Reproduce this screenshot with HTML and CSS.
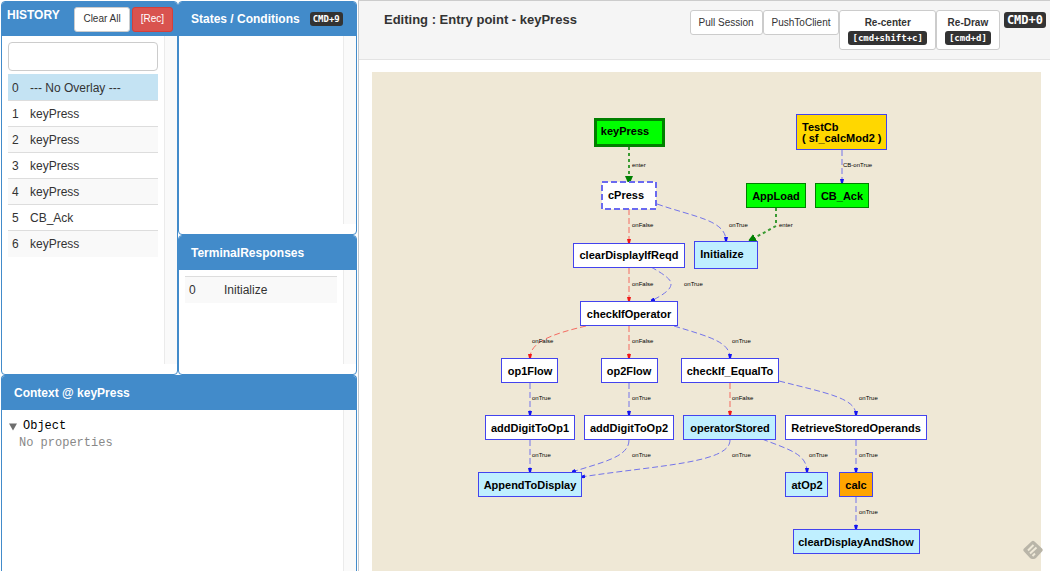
FILE: index.html
```html
<!DOCTYPE html>
<html lang="en">
<head>
<meta charset="utf-8">
<title>Flow editor</title>
<link rel="stylesheet" href="styles.css">
</head>
<body>
<div class="app">
  <aside class="sidebar">
    <div class="columns">
      <section class="panel history">
        <header class="panel-head history-head">
          <h2>HISTORY</h2>
          <button class="btn" type="button">Clear All</button>
          <button class="btn danger" type="button">[Rec]</button>
        </header>
        <div class="panel-body">
          <div class="content">
            <input class="filter" type="text" aria-label="Filter history">
            <table class="rows">
              <tbody>
                <tr class="selected"><td>0</td><td>--- No Overlay ---</td></tr>
                <tr><td>1</td><td>keyPress</td></tr>
                <tr class="alt"><td>2</td><td>keyPress</td></tr>
                <tr><td>3</td><td>keyPress</td></tr>
                <tr class="alt"><td>4</td><td>keyPress</td></tr>
                <tr><td>5</td><td>CB_Ack</td></tr>
                <tr class="alt"><td>6</td><td>keyPress</td></tr>
              </tbody>
            </table>
          </div>
          <div class="track"></div>
        </div>
      </section>
      <div class="stack">
        <section class="panel states">
          <header class="panel-head">
            <h2>States / Conditions</h2>
            <kbd>CMD+9</kbd>
          </header>
          <div class="panel-body">
            <div class="content"></div>
            <div class="track"></div>
          </div>
        </section>
        <section class="panel responses">
          <header class="panel-head"><h2>TerminalResponses</h2></header>
          <div class="panel-body">
            <div class="content">
              <table class="rows wide">
                <tbody><tr class="alt"><td>0</td><td>Initialize</td></tr></tbody>
              </table>
            </div>
            <div class="track"></div>
          </div>
        </section>
      </div>
    </div>
    <section class="panel context">
      <header class="panel-head"><h2>Context @ keyPress</h2></header>
      <div class="panel-body">
        <div class="content tree">
          <div class="tree-root">
            <svg width="8" height="8" viewBox="0 0 8 8" aria-hidden="true"><path d="M0 0.5H8L4 7.5Z" fill="#6e6e6e"/></svg>
            <span>Object</span>
          </div>
          <div class="tree-empty">No properties</div>
        </div>
        <div class="track"></div>
      </div>
    </section>
  </aside>

  <main class="editor">
    <header class="toolbar">
      <h1>Editing : Entry point - keyPress</h1>
      <div class="actions">
        <button class="btn" type="button">Pull Session</button>
        <button class="btn" type="button">PushToClient</button>
        <button class="btn strong" type="button">Re-center<kbd>[cmd+shift+c]</kbd></button>
        <button class="btn strong" type="button">Re-Draw<kbd>[cmd+d]</kbd></button>
        <kbd class="large">CMD+0</kbd>
      </div>
    </header>
    <div class="canvas">
      <svg class="graph" viewBox="372 72 669 499" preserveAspectRatio="xMidYMin meet" role="img" aria-label="Flow graph">
        <defs>
          <marker id="tip-blue" markerUnits="userSpaceOnUse" markerWidth="4" markerHeight="4" refX="4" refY="2" orient="auto"><path d="M0 0L4 1V3L0 4Z" fill="#1414f0"/></marker>
          <marker id="tip-red" markerUnits="userSpaceOnUse" markerWidth="4" markerHeight="4" refX="4" refY="2" orient="auto"><path d="M0 0L4 1V3L0 4Z" fill="#f01818"/></marker>
          <marker id="tip-green" markerUnits="userSpaceOnUse" markerWidth="7" markerHeight="8" refX="7" refY="4" orient="auto"><path d="M0 0L7 3V5L0 8Z" fill="#008000"/></marker>
        </defs>

        <g class="edges green">
          <path d="M629 147V183"/>
          <path d="M776 208V226L749 241"/>
        </g>
        <g class="edges red">
          <path d="M629 209V243"/>
          <path d="M629 268V301"/>
          <path d="M586 326C552 334 530 342 530 358"/>
          <path d="M629 326V358"/>
          <path d="M730 383V415"/>
        </g>
        <g class="edges blue">
          <path d="M657 204C694 217 726 220 726 241"/>
          <path d="M651 267C667 276 671 280 671 284C671 289 665 294 651 301"/>
          <path d="M842 150V183"/>
          <path d="M674 326C710 337 730 342 730 358"/>
          <path d="M530 383V415"/>
          <path d="M629 383V415"/>
          <path d="M779 381C826 393 856 398 856 415"/>
          <path d="M530 440V472"/>
          <path d="M629 440C629 457 603 462 572 472"/>
          <path d="M730 440C730 463 660 465 581 477"/>
          <path d="M762 439C790 450 807 454 807 472"/>
          <path d="M856 440V472"/>
          <path d="M856 497V529"/>
        </g>

        <g class="nodes">
          <rect class="entry current" x="595" y="119" width="68" height="26"/>
          <rect class="dashed" x="602" y="182" width="54" height="27"/>
          <rect x="573" y="243" width="111" height="24"/>
          <rect class="end" x="694" y="241" width="63" height="27"/>
          <rect class="entry" x="746" y="183" width="59" height="24"/>
          <rect class="entry" x="815" y="183" width="53" height="24"/>
          <rect class="callback" x="796" y="114" width="90" height="35"/>
          <rect x="580" y="301" width="97" height="24"/>
          <rect x="501" y="358" width="56" height="24"/>
          <rect x="601" y="358" width="56" height="24"/>
          <rect x="681" y="358" width="97" height="24"/>
          <rect x="485" y="415" width="89" height="24"/>
          <rect x="584" y="415" width="89" height="24"/>
          <rect class="end" x="683" y="415" width="92" height="24"/>
          <rect x="785" y="415" width="141" height="24"/>
          <rect class="end" x="478" y="472" width="103" height="24"/>
          <rect class="end" x="785" y="472" width="42" height="24"/>
          <rect class="calc" x="839" y="472" width="33" height="24"/>
          <rect class="end" x="793" y="529" width="126" height="24"/>
        </g>

        <g class="names">
          <text x="625" y="135">keyPress</text>
          <text x="626" y="199">cPress</text>
          <text x="629" y="259">clearDisplayIfReqd</text>
          <text x="722" y="258">Initialize</text>
          <text x="776" y="200">AppLoad</text>
          <text x="842" y="200">CB_Ack</text>
          <text class="left" x="802" y="131">TestCb</text>
          <text class="left" x="802" y="142">( sf_calcMod2 )</text>
          <text x="629" y="318">checkIfOperator</text>
          <text x="530" y="375">op1Flow</text>
          <text x="629" y="375">op2Flow</text>
          <text x="730" y="375">checkIf_EqualTo</text>
          <text x="530" y="432">addDigitToOp1</text>
          <text x="629" y="432">addDigitToOp2</text>
          <text x="730" y="432">operatorStored</text>
          <text x="856" y="432">RetrieveStoredOperands</text>
          <text x="530" y="489">AppendToDisplay</text>
          <text x="807" y="489">atOp2</text>
          <text x="856" y="489">calc</text>
          <text x="856" y="546">clearDisplayAndShow</text>
        </g>

        <g class="labels">
          <text x="632" y="167">enter</text>
          <text x="843" y="167">CB-onTrue</text>
          <text x="632" y="227">onFalse</text>
          <text x="729" y="227">onTrue</text>
          <text x="779" y="227">enter</text>
          <text x="632" y="286">onFalse</text>
          <text x="684" y="286">onTrue</text>
          <text x="532" y="343">onFalse</text>
          <text x="632" y="343">onFalse</text>
          <text x="732" y="343">onTrue</text>
          <text x="532" y="400">onTrue</text>
          <text x="632" y="400">onTrue</text>
          <text x="732" y="400">onFalse</text>
          <text x="859" y="400">onTrue</text>
          <text x="532" y="457">onTrue</text>
          <text x="632" y="457">onTrue</text>
          <text x="732" y="457">onTrue</text>
          <text x="809" y="457">onTrue</text>
          <text x="859" y="457">onTrue</text>
          <text x="859" y="514">onTrue</text>
        </g>
      </svg>
      <svg class="badge" width="20" height="20" viewBox="0 0 20 20" aria-hidden="true">
        <path d="M8.5 1.5Q10 0 11.5 1.5L19 8.5Q20.500 10 19 11.5L13 18Q12 19 10.5 19H9.5Q8 19 7 18L1 11.5Q-0.5 10 1 8.5Z" fill="#b9b5a8"/>
        <path d="M5 10.5L10.5 5M7 13.5L13.5 7.5M9.5 16L12 13.5" stroke="#efe9d8" stroke-width="2" fill="none"/>
      </svg>
    </div>
  </main>
</div>
</body>
</html>
```

FILE: styles.css
```css
* { box-sizing: border-box; }

body {
  margin: 0;
  background: #fff;
  color: #333;
  font: 12px/18px "Liberation Sans", Arial, sans-serif;
}

h1, h2 { margin: 0; font-weight: bold; }
h2 { font-size: 12px; line-height: 18px; white-space: nowrap; }

.app { display: flex; min-height: 100vh; }

/* Sidebar */
.sidebar {
  flex: 0 0 359px;
  display: flex;
  flex-direction: column;
  padding: 1px 1px 0;
  border-right: 1px solid #c4c8cc;
}

.columns { display: grid; grid-template-columns: 177px 1fr; min-height: 374px; }
.stack { display: flex; flex-direction: column; }
.panel {
  display: flex;
  flex-direction: column;
  border: 1px solid #428bca;
  border-radius: 4px;
  overflow: hidden;
}
.states { flex: 0 0 234px; }
.responses, .context { flex: 1; }
.context { border-bottom: 0; border-radius: 4px 4px 0 0; }

.panel-head {
  display: flex;
  align-items: center;
  gap: 10px;
  height: 34px;
  padding: 0 12px;
  background: #428bca;
  color: #fff;
}
.history-head { gap: 2px; padding: 0 4px 0 5px; }
.history-head h2 { flex: 1; align-self: flex-start; padding-top: 4px; }

.panel-body { flex: 1; display: flex; padding-bottom: 10px; }
.context .panel-body { padding-bottom: 0; }
.content { flex: 1; padding: 6px; }
.track {
  width: 13px;
  background: #fafafa;
  border-left: 1px solid #ebebeb;
}

.filter {
  display: block;
  width: 100%;
  height: 29px;
  margin-bottom: 3px;
  padding: 4px 8px;
  border: 1px solid #ccc;
  border-radius: 4px;
  background: #fff;
}

.rows { width: 100%; border-collapse: collapse; }
.rows td { height: 26px; padding: 0 4px; border-top: 1px solid #ddd; }
.rows td:first-child { width: 18px; }
.rows.wide td:first-child { width: 35px; }
.rows .alt { background: #f9f9f9; }
.rows .selected { background: #c4e3f3; }
.rows .selected td { border-top-color: #c4e3f3; }

.tree {
  padding: 8px 7px;
  font: 12px/17px "Liberation Mono", "Courier New", monospace;
}
.tree-root { display: flex; align-items: center; gap: 6px; color: #000; }
.tree-empty { padding-left: 10px; color: #888; }

/* Buttons and key hints */
.btn {
  height: 25px;
  padding: 0 8px;
  border: 1px solid #ccc;
  border-radius: 3px;
  background: #fff;
  color: #333;
  font: 10px/16px "Liberation Sans", Arial, sans-serif;
}
.btn.danger { border-color: #d43f3a; background: #d9534f; color: #fff; }
.btn.strong {
  display: flex;
  flex-direction: column;
  align-items: center;
  height: 40px;
  padding: 4px 8px;
  font-weight: bold;
}

kbd {
  padding: 0 4px;
  border-radius: 3px;
  background: #333;
  color: #fff;
  font: bold 9px/14px "DejaVu Sans Mono", monospace;
}
.panel-head kbd { padding: 0 3px; }
kbd.large { margin: 2px 0 0 4px; padding: 0 3px; font-size: 12px; line-height: 16px; }

/* Editor */
.editor { flex: 1; display: flex; flex-direction: column; min-width: 0; }
.toolbar {
  display: flex;
  align-items: flex-start;
  justify-content: space-between;
  min-height: 60px;
  padding: 9px 4px 0 25px;
  background: #f5f5f5;
  border-top: 1px solid #ccc;
  border-bottom: 1px solid #e3e3e3;
}
.toolbar h1 { font-size: 13px; line-height: 20px; }
.actions { display: flex; align-items: flex-start; }

.canvas {
  flex: 1;
  display: flex;
  position: relative;
  margin: 12px 9px 0 13px;
  background: #efe8d6;
}
.graph { flex: 1; width: 100%; min-width: 0; }
.badge { position: absolute; right: -2px; bottom: 11px; }

.edges { fill: none; stroke-dasharray: 6 3; }
.edges.blue { stroke: #7474ea; }
.edges.blue path { marker-end: url(#tip-blue); }
.edges.red { stroke: #f46a60; }
.edges.red path { marker-end: url(#tip-red); }
.edges.green { stroke: #3a9a32; stroke-width: 2px; stroke-dasharray: 3 3; }
.edges.green path { marker-end: url(#tip-green); }

.nodes rect { fill: #fff; stroke: #4343ee; shape-rendering: crispEdges; }
.nodes .end { fill: #bfefff; }
.nodes .entry { fill: #0f0; stroke: #008000; }
.nodes .current { stroke-width: 3px; }
.nodes .dashed { stroke: #6a6af0; stroke-width: 2px; stroke-dasharray: 6 3; }
.nodes .callback { fill: #ffd700; }
.nodes .calc { fill: #ffa500; }

.names { font: bold 11px "Liberation Sans", Arial, sans-serif; fill: #000; text-anchor: middle; }
.names .left { text-anchor: start; }
.labels { font: 6px "Liberation Sans", Arial, sans-serif; fill: #000; }
```
